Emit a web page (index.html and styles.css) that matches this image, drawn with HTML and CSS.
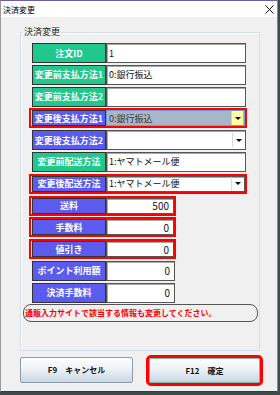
FILE: index.html
```html
<!DOCTYPE html>
<html>
<head>
    <title>決済変更</title>
    <link rel="stylesheet" href="styles.css">
</head>
<body>
    <div class="window">
        <div class="titlebar">
            <span class="title">決済変更</span>
            <svg class="close" width="9" height="9" viewBox="0 0 9 9">
                <path d="M0.5 0.5 L8.5 8.5 M8.5 0.5 L0.5 8.5" stroke="#111" stroke-width="1"/>
            </svg>
        </div>

        <div class="client">
            <fieldset class="group">
                <legend>決済変更</legend>

                <div class="rows">
                    <div class="row">
                        <div class="label green">注文ID</div>
                        <div class="field">1</div>
                    </div>
                    <div class="row">
                        <div class="label green">変更前支払方法1</div>
                        <div class="field">0:銀行振込</div>
                    </div>
                    <div class="row">
                        <div class="label green">変更前支払方法2</div>
                        <div class="field"></div>
                    </div>
                    <div class="row marked">
                        <div class="label blue">変更後支払方法1</div>
                        <div class="field combo focused">
                            <span class="value">0:銀行振込</span>
                            <span class="drop yellow"><i></i></span>
                        </div>
                    </div>
                    <div class="row">
                        <div class="label blue">変更後支払方法2</div>
                        <div class="field combo">
                            <span class="value"></span>
                            <span class="drop"><i></i></span>
                        </div>
                    </div>
                    <div class="row">
                        <div class="label green">変更前配送方法</div>
                        <div class="field">1:ヤマトメール便</div>
                    </div>
                    <div class="row marked">
                        <div class="label blue">変更後配送方法</div>
                        <div class="field combo">
                            <span class="value">1:ヤマトメール便</span>
                            <span class="drop"><i></i></span>
                        </div>
                    </div>
                    <div class="row short marked">
                        <div class="label blue">送料</div>
                        <div class="field num">500</div>
                    </div>
                    <div class="row short marked">
                        <div class="label blue">手数料</div>
                        <div class="field num">0</div>
                    </div>
                    <div class="row short marked">
                        <div class="label blue">値引き</div>
                        <div class="field num">0</div>
                    </div>
                    <div class="row short">
                        <div class="label blue">ポイント利用額</div>
                        <div class="field num">0</div>
                    </div>
                    <div class="row short">
                        <div class="label blue">決済手数料</div>
                        <div class="field num">0</div>
                    </div>
                </div>

                <div class="notice">通販入力サイトで該当する情報も変更してください。</div>
            </fieldset>

            <div class="buttons">
                <button class="btn cancel-button">F9　キャンセル</button>
                <button class="btn ok-button">F12　確定</button>
            </div>
        </div>
    </div>
</body>
</html>
```

FILE: styles.css
```css
* {
    box-sizing: border-box;
}

body {
    margin: 0;
    width: 280px;
    height: 395px;
    overflow: hidden;
    background-color: #3d4b49;
    font-family: "Noto Sans CJK JP", "Noto Sans", sans-serif;
}

.window {
    width: 278px;
    height: 392px;
    background-color: #f0f0f0;
    border-top: 1px solid #6c5fa0;
    border-left: 1px solid #9a9a9a;
    border-right: 1px solid #8a8a8a;
    border-bottom: 1px solid #3a3a3a;
    display: flex;
    flex-direction: column;
}

.titlebar {
    height: 16px;
    background-color: #ffffff;
    display: flex;
    align-items: center;
    justify-content: space-between;
    padding: 0 3px 0 2px;
    font-size: 8px;
    color: #000;
}

.client {
    flex: 1;
    padding: 10px 0 0 19px;
}

.group {
    margin: 0;
    width: 240px;
    padding: 6px 0 28px 2px;
    border: 1px solid #d3dde6;
    box-shadow: inset 1px 1px 0 #ffffff;
}

.group legend {
    padding: 0 1px;
    font-size: 9px;
    line-height: 10px;
    color: #222;
}

.rows {
    display: flex;
    flex-direction: column;
    gap: 1.8px;
    margin-left: 6px;
    width: 218px;
}

.row {
    display: flex;
    height: 20px;
    padding: 0 1px 0 3px;
}

.row.marked {
    border: 2px solid #ff0000;
    padding: 0 0 0 1px;
}

.row.short {
    width: 147px;
}

.label {
    width: 74px;
    flex-shrink: 0;
    border: 1px solid #333;
    color: #ffffff;
    font-weight: bold;
    font-size: 9px;
    display: flex;
    align-items: center;
    justify-content: center;
    white-space: nowrap;
}

.green {
    background-color: #20c98b;
}

.blue {
    background-color: #5b5bef;
}

.field {
    flex: 1;
    background-color: #ffffff;
    border: 1px solid #555;
    box-shadow: inset 1px 1px 0 #a8a8a8;
    font-size: 9px;
    color: #111;
    display: flex;
    align-items: center;
    padding: 0 2px;
    white-space: nowrap;
    overflow: hidden;
}

.field.num {
    justify-content: flex-end;
    padding-right: 4px;
    font-size: 10px;
}

.combo {
    padding-right: 1px;
}

.combo .value {
    flex: 1;
}

.combo.focused {
    background-color: #a7b7c9;
    border-color: #6f9fd0;
    box-shadow: none;
    color: #3a3a3a;
}

.drop {
    width: 12px;
    height: 14px;
    border-left: 1px solid #d8d8d8;
    display: flex;
    align-items: center;
    justify-content: center;
}

.drop.yellow {
    background-color: #ffffa6;
    border-left: 1px solid #c8d4e0;
}

.drop i {
    width: 0;
    height: 0;
    border-left: 3px solid transparent;
    border-right: 3px solid transparent;
    border-top: 3px solid #000;
}

.notice {
    margin-top: 1px;
    width: 235px;
    height: 18px;
    border: 1px solid #555;
    border-radius: 8px;
    color: #ff0000;
    font-size: 8px;
    font-weight: bold;
    display: flex;
    align-items: center;
    padding-left: 1px;
    white-space: nowrap;
    overflow: hidden;
}

.buttons {
    display: flex;
    align-items: flex-end;
    gap: 16px;
    margin-top: 6px;
}

.btn {
    font-family: "Noto Sans CJK JP", "Noto Sans", sans-serif;
    font-size: 8px;
    font-weight: bold;
    color: #111;
    border: 1px solid #8d9aa8;
    border-radius: 2px;
    background: linear-gradient(#fdfdfd, #eef2f6 45%, #c8d7e5);
    padding: 0;
}

.cancel-button {
    width: 113px;
    height: 26px;
}

.ok-button {
    width: 111px;
    height: 25px;
    border-color: #7fb7a8;
    outline: 3px solid #ff0000;
}
```
